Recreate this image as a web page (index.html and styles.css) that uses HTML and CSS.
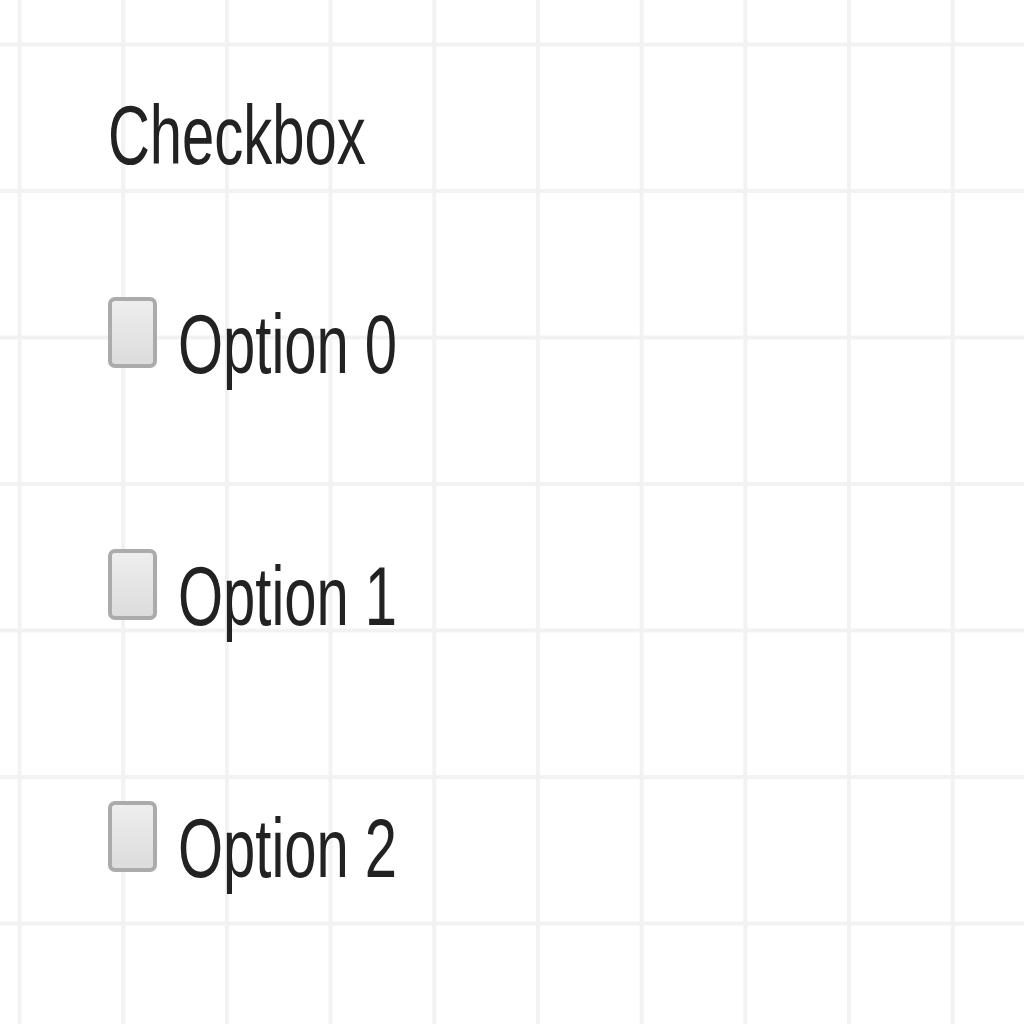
FILE: index.html
```html
<!DOCTYPE html>
<html>
<head>
<meta charset="utf-8">
<link rel="stylesheet" href="styles.css">
</head>
<body>
<div class="page">
  <div class="title"><span class="txt">Checkbox</span></div>
  <div class="options">
    <label class="row"><span class="box"></span><span class="label"><span class="txt">Option 0</span></span></label>
    <label class="row"><span class="box"></span><span class="label"><span class="txt">Option 1</span></span></label>
    <label class="row"><span class="box"></span><span class="label"><span class="txt">Option 2</span></span></label>
  </div>
</div>
</body>
</html>
```

FILE: styles.css
```css
html, body {
  margin: 0;
  padding: 0;
  width: 1024px;
  height: 1024px;
  overflow: hidden;
}
body {
  background-color: #fff;
  background-image:
    linear-gradient(to right, #f2f2f2 0, #f2f2f2 4px, transparent 4px),
    linear-gradient(to bottom, #f2f2f2 0, #f2f2f2 4px, transparent 4px);
  background-size: 103.7px 100%, 100% 146.5px;
  background-position: 17.5px 0, 0 42.5px;
  font-family: "Liberation Sans", Arial, sans-serif;
  color: #222;
}
.page {
  padding: 93px 0 0 108px;
}
.title {
  font-size: 84px;
  line-height: 84px;
  height: 84px;
}
.txt {
  display: inline-block;
  transform: scaleX(0.69);
  transform-origin: 0 0;
  white-space: nowrap;
}
.options {
  margin-top: 120px;
  display: flex;
  flex-direction: column;
  gap: 162px;
}
.row {
  display: flex;
  align-items: flex-start;
  gap: 21px;
  height: 90px;
}
.box {
  box-sizing: border-box;
  width: 49px;
  height: 71px;
  border: 4px solid #ababab;
  border-radius: 7px;
  background: linear-gradient(to bottom, #eeeeee, #dcdcdc);
  flex: none;
}
.label {
  margin-top: 5px;
  font-size: 84px;
  line-height: 84px;
}
```
